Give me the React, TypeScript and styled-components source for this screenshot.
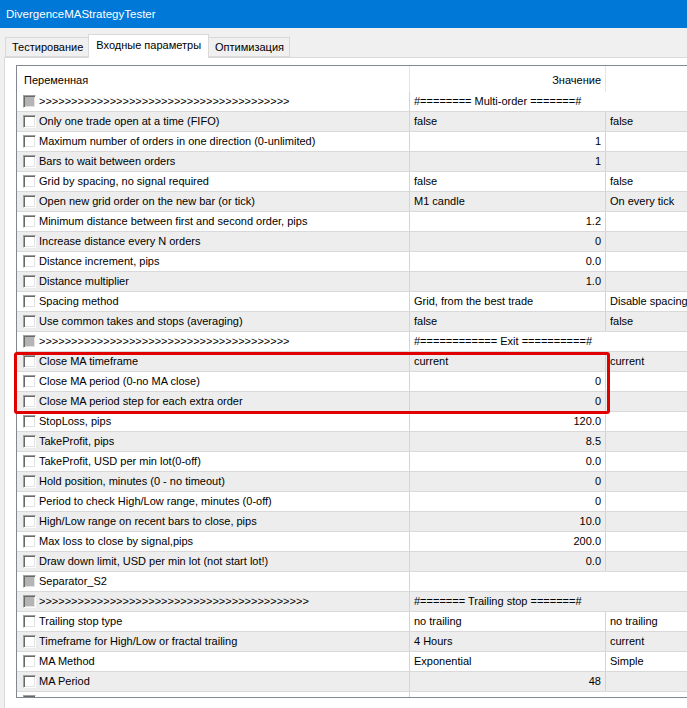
import React from 'react';
import styled, { createGlobalStyle } from 'styled-components';

type Param = {
	name: string;
	value?: string;
	extra?: string;
	num?: boolean;
	sep?: boolean;
};

const params: Param[] = [
	{ sep: true, name: '>'.repeat(39), value: '#======== Multi-order =======#' },
	{ name: 'Only one trade open at a time (FIFO)', value: 'false', extra: 'false' },
	{ name: 'Maximum number of orders in one direction (0-unlimited)', value: '1', num: true },
	{ name: 'Bars to wait between orders', value: '1', num: true },
	{ name: 'Grid by spacing, no signal required', value: 'false', extra: 'false' },
	{ name: 'Open new grid order on the new bar (or tick)', value: 'M1 candle', extra: 'On every tick' },
	{ name: 'Minimum distance between first and second order, pips', value: '1.2', num: true },
	{ name: 'Increase distance every N orders', value: '0', num: true },
	{ name: 'Distance increment, pips', value: '0.0', num: true },
	{ name: 'Distance multiplier', value: '1.0', num: true },
	{ name: 'Spacing method', value: 'Grid, from the best trade', extra: 'Disable spacing' },
	{ name: 'Use common takes and stops  (averaging)', value: 'false', extra: 'false' },
	{ sep: true, name: '>'.repeat(39), value: '#============ Exit ==========#' },
	{ name: 'Close MA timeframe', value: 'current', extra: 'current' },
	{ name: 'Close MA period (0-no MA close)', value: '0', num: true },
	{ name: 'Close MA period step for each extra order', value: '0', num: true },
	{ name: 'StopLoss, pips', value: '120.0', num: true },
	{ name: 'TakeProfit, pips', value: '8.5', num: true },
	{ name: 'TakeProfit, USD per min lot(0-off)', value: '0.0', num: true },
	{ name: 'Hold position, minutes (0 - no timeout)', value: '0', num: true },
	{ name: 'Period to check High/Low range, minutes (0-off)', value: '0', num: true },
	{ name: 'High/Low range on recent bars to close, pips', value: '10.0', num: true },
	{ name: 'Max loss to close by signal,pips', value: '200.0', num: true },
	{ name: 'Draw down limit, USD per min lot (not start lot!)', value: '0.0', num: true },
	{ sep: true, name: 'Separator_S2', value: '' },
	{ sep: true, name: '>'.repeat(42), value: '#======= Trailing stop =======#' },
	{ name: 'Trailing stop type', value: 'no trailing', extra: 'no trailing' },
	{ name: 'Timeframe for High/Low or fractal trailing', value: '4 Hours', extra: 'current' },
	{ name: 'MA Method', value: 'Exponential', extra: 'Simple' },
	{ name: 'MA Period', value: '48', num: true },
	{ sep: true, name: '', value: '' },
];

const tabs = ['Тестирование', 'Входные параметры', 'Оптимизация'];

const App: React.FC = () => {
	return (
		<Window>
			<GlobalStyle />
			<TitleBar>DivergenceMAStrategyTester</TitleBar>
			<TabControl>
				<TabStrip>
					{tabs.map((t, i) => (
						<Tab key={t} $active={i === 1}>
							{t}
						</Tab>
					))}
				</TabStrip>
				<Page>
					<ListWrap>
						<List>
							<HeaderRow>
								<HeaderCell>Переменная</HeaderCell>
								<HeaderCell $right>Значение</HeaderCell>
								<HeaderCell />
							</HeaderRow>
							{params.map((p, i) => (
								<Row key={i} $alt={i % 2 === 1}>
									<NameCell>
										<CheckBox $disabled={p.sep} />
										<span>{p.name}</span>
									</NameCell>
									{p.sep ? (
										<ValueCell $span>{p.value}</ValueCell>
									) : (
										<>
											<ValueCell $right={p.num}>{p.value}</ValueCell>
											<ExtraCell>{p.extra}</ExtraCell>
										</>
									)}
								</Row>
							))}
						</List>
						<Highlight />
					</ListWrap>
				</Page>
			</TabControl>
		</Window>
	);
};

const GlobalStyle = createGlobalStyle`
	body {
		margin: 0;
		background: #f0f0f0;
		font-family: 'Liberation Sans', Arial, sans-serif;
	}
`;

const Window = styled.div`
	width: 687px;
	height: 708px;
	overflow: hidden;
	background: #f0f0f0;
`;

const TitleBar = styled.div`
	height: 28px;
	line-height: 28px;
	padding-left: 6px;
	background: #0078d7;
	color: #ffffff;
	font-size: 11.5px;
	white-space: nowrap;
`;

const TabControl = styled.div`
	margin-left: 4px;
`;

const TabStrip = styled.div`
	display: flex;
	align-items: flex-end;
	height: 29px;
	padding-left: 1px;
`;

const Tab = styled.div<{ $active?: boolean }>`
	box-sizing: border-box;
	height: ${(p) => (p.$active ? '24px' : '20px')};
	margin-bottom: ${(p) => (p.$active ? '-1px' : '0')};
	padding: ${(p) => (p.$active ? '3px 7px 0' : '2px 5px 0 6px')};
	border: 1px solid #d9d9d9;
	border-bottom: ${(p) => (p.$active ? 'none' : '1px solid #d9d9d9')};
	margin-left: ${(p) => (p.$active ? '-1px' : '0')};
	margin-right: ${(p) => (p.$active ? '-1px' : '0')};
	background: ${(p) => (p.$active ? '#ffffff' : '#f0f0f0')};
	color: #000000;
	font-size: 11px;
	line-height: 15px;
	white-space: nowrap;
	position: relative;
	z-index: ${(p) => (p.$active ? 1 : 0)};
`;

const Page = styled.div`
	width: 800px;
	height: 700px;
	background: #ffffff;
	border: 1px solid #d9d9d9;
	padding: 7px 0 0 11px;
`;

const ListWrap = styled.div`
	position: relative;
`;

const List = styled.div`
	height: 631px;
	width: 900px;
	overflow: hidden;
	border: 1px solid #828790;
	background: #ffffff;
	font-size: 11px;
	color: #000000;
`;

const columns = '393px 196px 1fr';

const HeaderRow = styled.div`
	display: grid;
	grid-template-columns: ${columns};
	height: 26px;
`;

const HeaderCell = styled.div<{ $right?: boolean }>`
	box-sizing: border-box;
	border-right: 1px solid #e5e5e5;
	padding: 8px 4px 0 7px;
	text-align: ${(p) => (p.$right ? 'right' : 'left')};
	white-space: nowrap;
`;

const Row = styled.div<{ $alt?: boolean }>`
	display: grid;
	grid-template-columns: ${columns};
	height: 20px;
	box-sizing: border-box;
	border-bottom: 1px solid #d9d9d9;
	background: ${(p) => (p.$alt ? '#ededed' : '#ffffff')};
	line-height: 19px;
	white-space: nowrap;
`;

const NameCell = styled.div`
	display: flex;
	align-items: center;
	gap: 3px;
	padding-left: 6px;
	border-right: 1px solid #d4d4d4;
	overflow: hidden;
`;

const ValueCell = styled.div<{ $right?: boolean; $span?: boolean }>`
	grid-column: ${(p) => (p.$span ? 'span 2' : 'auto')};
	padding: 0 4px;
	text-align: ${(p) => (p.$right ? 'right' : 'left')};
	border-right: ${(p) => (p.$span ? 'none' : '1px solid #d4d4d4')};
	overflow: hidden;
`;

const ExtraCell = styled.div`
	padding: 0 4px;
	overflow: hidden;
`;

const CheckBox = styled.span<{ $disabled?: boolean }>`
	flex: none;
	box-sizing: border-box;
	width: 13px;
	height: 13px;
	border: 1px solid;
	border-color: #a0a0a0 #ffffff #ffffff #a0a0a0;
	box-shadow: inset 1px 1px 0 #696969, inset -1px -1px 0 #e3e3e3;
	background: ${(p) => (p.$disabled ? '#b4b4b4' : '#ffffff')};
`;

const Highlight = styled.div`
	position: absolute;
	left: -2px;
	top: 287px;
	width: 596px;
	height: 62px;
	box-sizing: border-box;
	border: 3px solid #e00000;
	border-radius: 3px;
	pointer-events: none;
`;

export default App;
